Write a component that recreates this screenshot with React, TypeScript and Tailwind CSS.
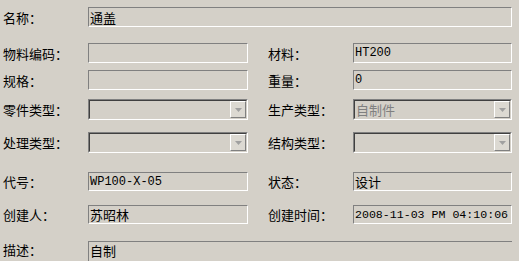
import React from "react";

const mono = '"Liberation Mono", "Noto Sans CJK SC", monospace';
const cjk = '"Noto Sans CJK SC", sans-serif';

function Label({ text, className = "" }: { text: string; className?: string }) {
  return (
    <div className={"w-[85px] shrink-0 text-[13px] leading-none text-black " + className} style={{ fontFamily: cjk }}>
      {text}
    </div>
  );
}

function Box({ value, w, h = "h-[20px]", cn = false, small = false }: { value?: string; w: string; h?: string; cn?: boolean; small?: boolean }) {
  return (
    <div className={`${w} ${h} shrink-0 border-t border-l border-t-[#808080] border-l-[#808080] border-b border-r border-b-white border-r-white bg-[#d4d0c8] flex items-center pl-[1px] overflow-hidden`}>
      <span
        className={`${cn ? "text-[13px]" : small ? "text-[11.6px]" : "text-[12px]"} leading-none text-black whitespace-nowrap`}
        style={{ fontFamily: cn ? cjk : mono }}
      >
        {value}
      </span>
    </div>
  );
}

function Combo({ value, w }: { value?: string; w: string }) {
  return (
    <div className={`${w} h-[21px] shrink-0 border-t border-l border-t-[#808080] border-l-[#808080] border-b border-r border-b-white border-r-white`}>
      <div className="w-full h-full border-t border-l border-t-[#404040] border-l-[#404040] border-b border-r border-b-[#d4d0c8] border-r-[#d4d0c8] flex items-center">
        <div className="flex-1 pl-[1px] text-[13px] leading-none text-[#808080] whitespace-nowrap" style={{ fontFamily: cjk }}>{value}</div>
        <div className="w-[16px] h-[17px] shrink-0 border-t border-l border-t-white border-l-white border-b border-r border-b-[#808080] border-r-[#808080] bg-[#dcd9d2] flex items-center justify-center">
          <svg width="7" height="4" viewBox="0 0 7 4"><path d="M0 0H7L3.5 4Z" fill="#a0a0a0" /></svg>
        </div>
      </div>
    </div>
  );
}

export default function App() {
  return (
    <div className="w-[519px] h-[261px] overflow-hidden bg-[#d4d0c8] flex flex-col pl-[3px]">
      <div className="mt-[7px] flex items-center">
        <Label text="名称：" />
        <Box value="通盖" w="w-[424px]" cn />
      </div>
      <div className="mt-[16px] flex items-center">
        <Label text="物料编码：" />
        <Box w="w-[160px]" />
        <Label text="材料：" className="ml-[20px]" />
        <Box value="HT200" w="w-[159px]" />
      </div>
      <div className="mt-[7px] flex items-center">
        <Label text="规格：" />
        <Box w="w-[160px]" />
        <Label text="重量：" className="ml-[20px]" />
        <Box value="0" w="w-[159px]" />
      </div>
      <div className="mt-[9px] flex items-center">
        <Label text="零件类型：" />
        <Combo w="w-[160px]" />
        <Label text="生产类型：" className="ml-[20px]" />
        <Combo value="自制件" w="w-[159px]" />
      </div>
      <div className="mt-[12px] flex items-center">
        <Label text="处理类型：" />
        <Combo w="w-[160px]" />
        <Label text="结构类型：" className="ml-[20px]" />
        <Combo w="w-[159px]" />
      </div>
      <div className="mt-[19px] flex items-center">
        <Label text="代号：" />
        <Box value="WP100-X-05" w="w-[160px]" h="h-[19px]" />
        <Label text="状态：" className="ml-[20px]" />
        <Box value="设计" w="w-[159px]" h="h-[19px]" cn />
      </div>
      <div className="mt-[14px] flex items-center">
        <Label text="创建人：" />
        <Box value="苏昭林" w="w-[160px]" h="h-[19px]" cn />
        <Label text="创建时间：" className="ml-[20px]" />
        <Box value="2008-11-03 PM 04:10:06" w="w-[159px]" h="h-[19px]" small />
      </div>
      <div className="mt-[17px] flex items-start">
        <div className="h-[17px] flex items-center">
          <Label text="描述：" />
        </div>
        <div className="w-[424px] h-[40px] shrink-0 border-t border-l border-t-[#808080] border-l-[#808080] pl-[1px]">
          <div className="h-[16px] flex items-center">
            <span className="text-[13px] leading-none text-black" style={{ fontFamily: cjk }}>自制</span>
          </div>
        </div>
      </div>
    </div>
  );
}
